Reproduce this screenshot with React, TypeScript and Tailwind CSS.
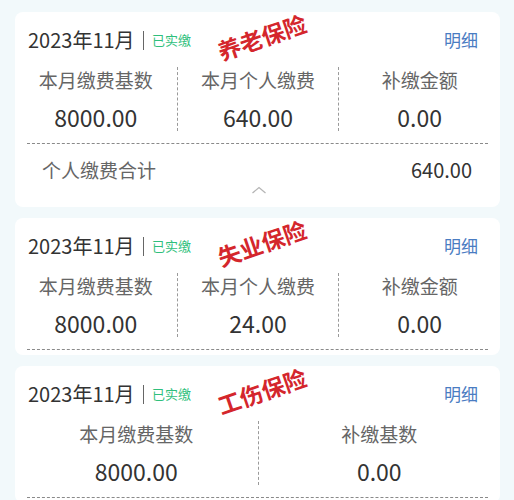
import React from "react";

type Col = { label: string; value: string };

const FONT = { fontFamily: '"Noto Sans CJK SC", "Noto Sans", sans-serif' };

function ChevronUp() {
  return (
    <svg width="16" height="8" viewBox="0 0 16 8" fill="none">
      <path d="M1.5 7L8 1.5L14.5 7" stroke="#b5b5b5" strokeWidth="1.3" />
    </svg>
  );
}

function Card({
  stamp,
  cols,
  total,
}: {
  stamp: string;
  cols: Col[];
  total?: string;
}) {
  return (
    <div className="relative ml-[15px] mr-[14px] rounded-lg bg-white pt-4">
      {/* header */}
      <div className="flex h-6 items-center justify-between pl-[13px] pr-[22px]">
        <div className="flex items-center">
          <span className="text-[20px] leading-6 text-[#333]">2023年11月</span>
          <span className="ml-[8px] h-[19px] w-[1.5px] bg-[#666]" />
          <span className="ml-[8px] text-[13px] leading-6 text-[#2fbf7c]">已实缴</span>
        </div>
        <span className="text-[17px] leading-6 text-[#4a7cc2]">明细</span>
      </div>

      {/* stamp */}
      <div className="pointer-events-none absolute left-[247px] top-[25px] -translate-x-1/2 -translate-y-1/2 -rotate-[19deg] whitespace-nowrap text-[23px] font-semibold leading-none text-[#d4262c]">
        {stamp}
      </div>

      {/* columns */}
      <div
        className={`mt-[15px] grid ${cols.length === 3 ? "grid-cols-3" : "grid-cols-2"}`}
      >
        {cols.map((c, i) => (
          <div
            key={c.label}
            className={`flex flex-col items-center ${i > 0 ? "border-l border-dashed border-[#9a9a9a]" : ""}`}
          >
            <span className="text-[19px] leading-[26px] text-[#666]">{c.label}</span>
            <span className="mt-[10px] text-[23px] leading-[28px] text-[#333]">{c.value}</span>
          </div>
        ))}
      </div>

      <div className="mx-3 mt-[12px] border-t border-dashed border-[#8a8a8a]" />

      {total ? (
        <>
          <div className="mt-[13px] flex items-center justify-between pl-[27px] pr-[28px]">
            <span className="text-[19px] leading-[26px] text-[#666]">个人缴费合计</span>
            <span className="text-[20px] leading-[26px] text-[#333]">{total}</span>
          </div>
          <div className="mt-[3px] flex justify-center pb-[13px] pl-[2px]">
            <ChevronUp />
          </div>
        </>
      ) : (
        <div className="h-[5px]" />
      )}
    </div>
  );
}

export default function App() {
  return (
    <div className="min-h-screen bg-[#f2f9fb] pt-[12px] pb-4" style={FONT}>
      <div className="flex flex-col gap-[11px]">
        <Card
          stamp="养老保险"
          cols={[
            { label: "本月缴费基数", value: "8000.00" },
            { label: "本月个人缴费", value: "640.00" },
            { label: "补缴金额", value: "0.00" },
          ]}
          total="640.00"
        />
        <Card
          stamp="失业保险"
          cols={[
            { label: "本月缴费基数", value: "8000.00" },
            { label: "本月个人缴费", value: "24.00" },
            { label: "补缴金额", value: "0.00" },
          ]}
        />
        <Card
          stamp="工伤保险"
          cols={[
            { label: "本月缴费基数", value: "8000.00" },
            { label: "补缴基数", value: "0.00" },
          ]}
        />
      </div>
    </div>
  );
}
